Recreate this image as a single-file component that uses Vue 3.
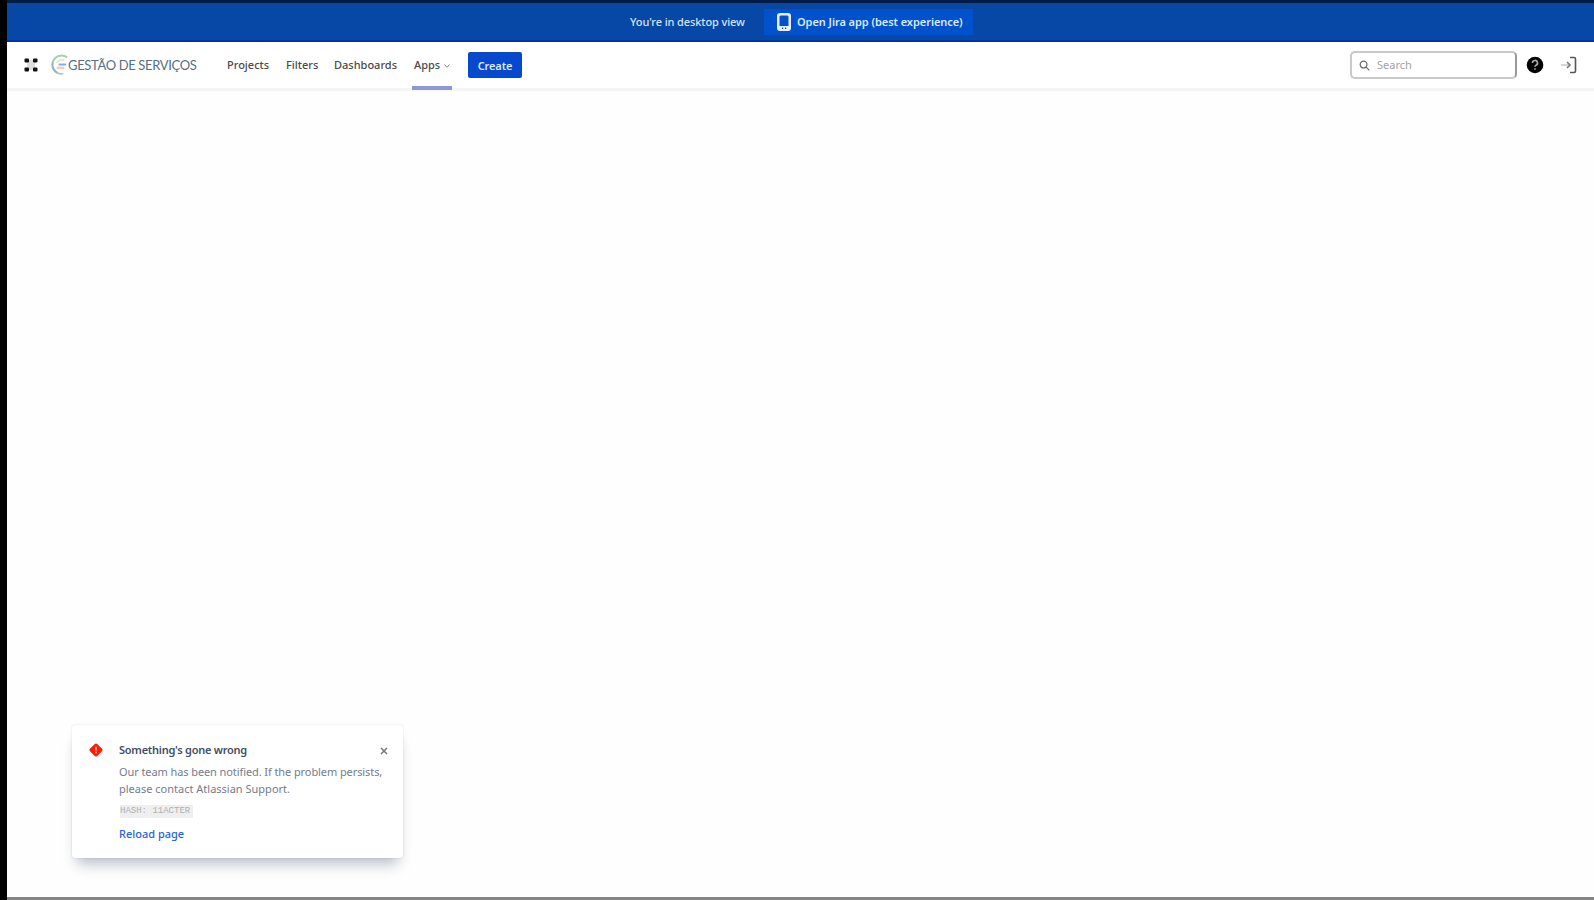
<template>
  <div class="page">
    <div class="banner">
      <span class="banner-text">You're in desktop view</span>
      <button class="banner-btn">
        <svg class="phone-icon" viewBox="0 0 14 18">
          <path fill="#e8f0ff" fill-rule="evenodd" d="M3 0h8a3 3 0 0 1 3 3v12a3 3 0 0 1-3 3H3a3 3 0 0 1-3-3V3a3 3 0 0 1 3-3zm.500 2.500L2.500 3.500v9.500h9V3.500l-1-1zM5 14.500v1.500h1.200v-1.500zm3 0v1.500h1.200v-1.500z" />
        </svg>
        <span class="banner-btn-text">Open Jira app (best experience)</span>
      </button>
    </div>

    <header class="header">
      <svg class="switcher" viewBox="0 0 14 14">
        <path d="M3 2h8v10H3z" fill="#ddd" />
        <rect x="0.500" y="0.500" width="4.500" height="4" rx="1" fill="#111" />
        <rect x="9" y="0.500" width="4.500" height="4" rx="1" fill="#111" />
        <rect x="0.500" y="9.500" width="4.500" height="4" rx="1" fill="#111" />
        <rect x="9" y="9.500" width="4.500" height="4" rx="1" fill="#111" />
      </svg>
      <div class="logo">
        <svg class="logo-mark" viewBox="0 0 20 22" fill="none">
          <path d="M17 3A9.500 9.500 0 0 0 2 8" stroke="#a5d3a4" stroke-width="2.200" />
          <path d="M2 8a9.500 9.500 0 0 0 5 11.500" stroke="#94b5c2" stroke-width="2.200" />
          <path d="M7 19.500c2 1 4 1.200 6 .5" stroke="#9bcccc" stroke-width="1.800" />
          <path d="M14 6a6 6 0 0 0-8 3" stroke="#d3e6cd" stroke-width="1.500" />
          <path d="M8 10.500h8" stroke="#78aef0" stroke-width="2" />
          <path d="M6 14h8" stroke="#f8c8b8" stroke-width="2.500" />
        </svg>
        <span class="logo-text">GESTÃO DE SERVIÇOS</span>
      </div>
      <nav class="nav">
        <a
          v-for="item in navItems"
          :key="item.label"
          class="nav-item"
          :class="[item.name, { active: item.active }]"
        >
          <span class="nav-label">{{ item.label }}</span>
          <svg v-if="item.active" class="chevron" viewBox="0 0 8 6">
            <path d="M1.500 1.500 4 4.300l2.500-2.800" fill="none" stroke="#888" />
          </svg>
        </a>
      </nav>
      <button class="create-btn">Create</button>
      <div class="search">
        <svg class="search-icon" viewBox="0 0 12 12" fill="none" stroke="#666" stroke-width="1.300">
          <circle cx="5" cy="5" r="3.700" />
          <path d="m7.800 7.800 3.500 3.500" />
        </svg>
        <input v-model="query" class="search-input" placeholder="Search" />
      </div>
      <svg class="help-icon" viewBox="0 0 18 18">
        <circle cx="9" cy="9" r="8.300" fill="#050505" />
        <path d="M6.500 7a2.500 2.500 0 1 1 3.600 2.200c-.8.400-1.100.8-1.100 1.600" fill="none" stroke="#aaa" stroke-width="1.700" />
        <circle cx="9" cy="13" r="1" fill="#888" />
      </svg>
      <svg class="login-icon" viewBox="0 0 16 18" fill="none">
        <path d="M0 9h8" stroke="#ccc" stroke-width="1.600" />
        <path d="M6 6l3 3-3 3" stroke="#777" stroke-width="1.600" />
        <path d="M9 1.500h4a1.500 1.500 0 0 1 1.500 1.500v12a1.500 1.500 0 0 1-1.500 1.500H9" stroke="#555" stroke-width="1.600" />
      </svg>
    </header>

    <main class="content"></main>

    <section v-if="showError" class="flag">
      <svg class="error-icon" viewBox="0 0 14 14">
        <path d="M5.500 1.200a2.100 2.100 0 0 1 3 0l4.300 4.300a2.100 2.100 0 0 1 0 3l-4.300 4.300a2.100 2.100 0 0 1-3 0L1.200 8.500a2.100 2.100 0 0 1 0-3z" fill="#fa1e08" />
        <path d="M7 3.800v3.700M7 8.700v1.500" stroke="#ffc4b8" stroke-width="1.500" />
      </svg>
      <div class="flag-body">
        <div class="flag-title">Something's gone wrong</div>
        <p class="flag-text">
          <span class="line-one">Our team has been notified. If the problem persists,</span><br />
          <span class="line-two">please contact Atlassian Support.</span>
        </p>
        <code class="flag-code">HASH: 11ACTER</code>
        <a class="flag-link">Reload page</a>
      </div>
      <button class="close-btn" @click="showError = false">
        <svg viewBox="0 0 8 8"><path d="m1 1 6 6M7 1 1 7" stroke="#777" stroke-width="1.500" /></svg>
      </button>
    </section>
  </div>
</template>

<script setup>
import { ref } from 'vue';

const query = ref('');
const showError = ref(true);

const navItems = [
  { name: 'projects', label: 'Projects' },
  { name: 'filters', label: 'Filters' },
  { name: 'dashboards', label: 'Dashboards' },
  { name: 'apps', label: 'Apps', active: true }
];
</script>

<style>
body {
  margin: 0;
  overflow: hidden;
}
</style>

<style scoped>
.page {
  position: relative;
  display: flex;
  flex-direction: column;
  box-sizing: border-box;
  width: 100vw;
  height: 100vh;
  border-left: 7px solid #000;
  background: #fefefe;
  font-family: "Noto Sans", sans-serif;
  font-size: 11px;
  white-space: nowrap;
}

button {
  border: none;
  padding: 0;
  font-family: inherit;
}

.banner {
  display: flex;
  box-sizing: border-box;
  height: 42px;
  flex-shrink: 0;
  align-items: center;
  padding-left: 623px;
  border-top: 3px solid #001b48;
  border-bottom: 2px solid #0631a0;
  background: #0747a6;
  color: #d6e3f7;
}

.banner-text {
  width: 134px;
  font-weight: 500;
  letter-spacing: -0.1px;
}

.banner-btn {
  display: flex;
  align-items: center;
  width: 209px;
  height: 26px;
  padding-left: 13px;
  background: #0052cc;
}

.phone-icon {
  width: 14px;
  height: 18px;
  margin-right: 6px;
}

.banner-btn-text {
  color: #dce9ff;
  font-size: 11px;
  font-weight: 600;
  letter-spacing: -0.06px;
}

.header {
  display: flex;
  box-sizing: border-box;
  height: 49px;
  flex-shrink: 0;
  align-items: center;
  padding: 0 17px;
  border-bottom: 3px solid #f5f5f5;
  background: #fff;
}

.switcher {
  width: 14px;
  height: 14px;
}

.logo {
  display: flex;
  flex-shrink: 0;
  align-items: center;
  width: 176px;
  margin-left: 13px;
}

.logo-mark {
  width: 19px;
  height: 22px;
  flex-shrink: 0;
}

.logo-text {
  margin-left: -2px;
  color: #55707f;
  font-family: Lato, sans-serif;
  font-size: 13px;
  letter-spacing: -0.35px;
}

.nav {
  display: flex;
  align-self: stretch;
}

.nav-item {
  position: relative;
  display: flex;
  align-items: center;
  padding-bottom: 2px;
  color: #4a4a4a;
  font-weight: 500;
}

.projects {
  width: 59px;
}

.filters {
  width: 48px;
}

.dashboards {
  width: 80px;
}

.apps {
  width: 38px;
}

.nav-item.active::after {
  content: "";
  position: absolute;
  right: 0;
  bottom: -2px;
  left: -2px;
  height: 4px;
  background: #8e98d8;
}

.chevron {
  width: 8px;
  height: 6px;
  margin: 3px 0 0 3px;
}

.create-btn {
  width: 54px;
  height: 26px;
  margin-left: 16px;
  border-radius: 2px;
  background: #0649cc;
  color: #dce8ff;
  font-size: 11px;
  font-weight: 600;
  letter-spacing: -0.1px;
}

.search {
  display: flex;
  box-sizing: border-box;
  align-items: center;
  width: 167px;
  height: 28px;
  margin-left: auto;
  padding-left: 7px;
  border: 2px solid #c9c9c9;
  border-right-color: #999;
  border-radius: 5px;
}

.search-icon {
  width: 11px;
  height: 11px;
}

.search-input {
  width: 120px;
  margin-left: 7px;
  padding: 0 0 2px;
  border: none;
  background: transparent;
  font-family: inherit;
  font-size: 11px;
}

.search-input::placeholder {
  color: #a3a3a3;
}

.help-icon {
  width: 18px;
  height: 18px;
  margin-left: 9px;
}

.login-icon {
  width: 16px;
  height: 18px;
  margin-left: 17px;
}

.content {
  flex: 1;
  border-bottom: 3px solid #858585;
}

.flag {
  position: absolute;
  bottom: 42px;
  left: 65px;
  display: flex;
  box-sizing: border-box;
  width: 331px;
  height: 133px;
  padding: 18px 16px 0 17px;
  border-radius: 3px;
  background: #fff;
  box-shadow: 0 0 2px rgba(9, 30, 66, 0.16), 0 11px 13px -5px rgba(9, 30, 66, 0.28);
}

.error-icon {
  width: 14px;
  height: 14px;
}

.flag-body {
  display: flex;
  flex-direction: column;
  align-items: flex-start;
  margin-left: 16px;
}

.flag-title {
  height: 14px;
  color: #434e63;
  font-size: 11px;
  font-weight: 600;
  letter-spacing: -0.25px;
  line-height: 14px;
}

.flag-text {
  margin: 6px 0 8px;
  color: #747c8c;
  line-height: 17px;
}

.line-one {
  letter-spacing: -0.09px;
}

.flag-code {
  width: 73px;
  height: 13px;
  margin-left: 1px;
  background: #efefef;
  color: #b0b0b0;
  font-family: "Liberation Mono", monospace;
  font-size: 9px;
  line-height: 13px;
}

.flag-link {
  margin-top: 8px;
  color: #2864d5;
  font-weight: 500;
  line-height: 15px;
}

.close-btn {
  position: absolute;
  top: 22px;
  right: 15px;
  width: 8px;
  height: 8px;
  background: transparent;
}

.close-btn svg {
  display: block;
}
</style>
